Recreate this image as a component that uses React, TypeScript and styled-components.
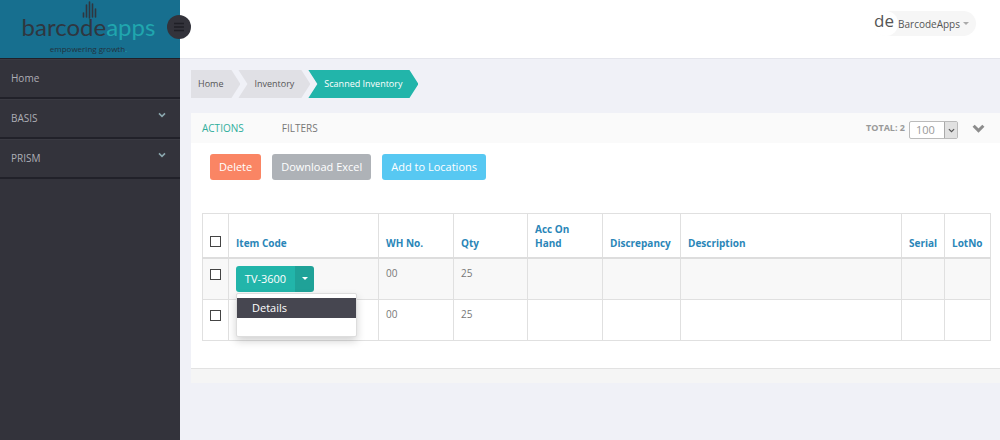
import React from "react";
import styled, { createGlobalStyle } from "styled-components";

const Global = createGlobalStyle`
  * { box-sizing: border-box; }
  body { margin: 0; background: #f0f1f7; font: 11px/14px "Open Sans", "Noto Sans", sans-serif; color: #777; }
  button, select, input { font: inherit; margin: 0; }
  a { text-decoration: none; color: inherit; }
`;

const Page = styled.div`
  display: flex;
  min-height: 100vh;
`;

const Sidebar = styled.aside`
  flex: 0 0 180px;
  background: #33333b;
`;

const Brand = styled.div`
  position: relative;
  height: 59px;
  padding-top: 11px;
  border-bottom: 1px solid #212129;
  background: #176f8f;
  color: #2f3640;
  display: flex;
  flex-direction: column;
  align-items: center;
`;

const BrandBars = styled.svg`
  position: absolute;
  left: 82px;
  top: 1px;
`;

const BrandName = styled.div`
  font: 400 24px/32px Lato, sans-serif;
  padding-right: 3px;
  span { color: #20a6ae; }
`;

const Tagline = styled.div`
  font: 400 8px/12px "Open Sans", sans-serif;
  color: #22323e;
  padding-right: 3px;
  span { color: #20b6ae; }
`;

const MenuToggle = styled.button`
  position: absolute;
  right: -11px;
  top: 15px;
  width: 24px;
  height: 24px;
  padding: 0;
  border: 0;
  border-radius: 50%;
  background: #33333b;
  display: grid;
  place-items: center;
`;

const NavItem = styled.a`
  display: flex;
  justify-content: space-between;
  height: 40px;
  padding: 11px 14px 0 11px;
  border-top: 1px solid #3a3a42;
  border-bottom: 2px solid #212129;
  font-size: 10px;
  color: #adaeb5;
  svg { margin-top: 1px; }
`;

const Main = styled.div`
  flex: 1;
  min-width: 0;
`;

const TopBar = styled.header`
  height: 59px;
  padding: 11px 24px 0 0;
  background: #fff;
  border-bottom: 1px solid #e4e5ec;
  display: flex;
  justify-content: flex-end;
  align-items: flex-start;
`;

const UserButton = styled.button`
  display: flex;
  align-items: center;
  height: 25px;
  padding: 0 7px 0 0;
  border: 0;
  border-radius: 13px;
  background: #f6f6f6;
  color: #555;
  font-size: 10px;
`;

const Avatar = styled.span`
  width: 24px;
  height: 25px;
  border-radius: 12px;
  background: #fff;
  font-size: 17px;
  line-height: 20px;
  text-align: left;
`;

const Caret = styled.span<{ $color: string }>`
  border: 3px solid transparent;
  border-top-color: ${(p) => p.$color};
  border-bottom: 0;
`;

const UserName = styled.span`
  margin-right: 3px;
`;

const Content = styled.main`
  padding: 11px 0 0 11px;
`;

const Crumbs = styled.nav`
  display: flex;
  height: 28px;
`;

const Crumb = styled.a<{ $first?: boolean; $active?: boolean }>`
  line-height: 28px;
  font-size: 9px;
  padding: 0 ${(p) => (p.$first ? 17 : 16)}px 0 ${(p) => (p.$first ? 7 : 16)}px;
  margin-left: ${(p) => (p.$first ? 0 : -2)}px;
  color: ${(p) => (p.$active ? "#fff" : "#555")};
  background: ${(p) => (p.$active ? "#22b5aa" : "#e0e0e5")};
  clip-path: polygon(
    0 0, calc(100% - 9px) 0, 100% 50%, calc(100% - 9px) 100%, 0 100%,
    ${(p) => (p.$first ? "0 50%" : "9px 50%")}
  );
`;

const Panel = styled.section`
  margin-top: 15px;
  background: #fff;
`;

const PanelHead = styled.div`
  display: flex;
  align-items: center;
  height: 30px;
  padding: 0 15px 0 11px;
  background: #fafafa;
`;

const Tab = styled.button<{ $active?: boolean }>`
  padding: 0;
  margin-right: 38px;
  border: 0;
  background: none;
  font-size: 10px;
  color: ${(p) => (p.$active ? "#2fae9c" : "#777")};
`;

const Total = styled.label`
  margin-left: auto;
  margin-right: 4px;
  font-size: 9px;
  font-weight: 700;
  color: #999;
`;

const SelectWrap = styled.span`
  display: flex;
  width: 49px;
  height: 18px;
  margin: 4px 14px 0 0;
  border: 1px solid #bbb;
  border-radius: 2px;
  background: #fff;
  position: relative;
`;

const PageSize = styled.select`
  appearance: none;
  width: 100%;
  padding: 0 0 0 6px;
  border: 0;
  background: transparent;
  color: #999;
  font-size: 11px;
  line-height: 16px;
`;

const SelectArrow = styled.span`
  position: absolute;
  right: 0;
  top: 0;
  bottom: 0;
  width: 13px;
  border-left: 1px solid #aaa;
  background: #e1e1e1;
  display: grid;
  place-items: center;
  pointer-events: none;
`;

const Collapse = styled.button`
  display: flex;
  padding: 0;
  border: 0;
  background: none;
`;

const PanelBody = styled.div`
  padding: 11px 9px 27px 11px;
`;

const Actions = styled.div`
  display: flex;
  gap: 11px;
  padding: 0 8px 33px;
`;

const ActionButton = styled.button<{ $color: string }>`
  height: 26px;
  padding: 0 9px;
  border: 0;
  border-radius: 3px;
  background: ${(p) => p.$color};
  color: #fff;
  font-size: 11px;
`;

const Table = styled.table`
  width: 100%;
  table-layout: fixed;
  border-collapse: collapse;
  th, td {
    border: 1px solid #e0e0e0;
    padding: 7px;
    text-align: left;
    vertical-align: top;
  }
  th {
    height: 44px;
    padding-top: 6px;
    vertical-align: bottom;
    border-bottom: 2px solid #ddd;
    color: #2a86b8;
    font-size: 10px;
    font-weight: 700;
  }
  td { height: 41px; font-size: 10px; }
  tbody tr:nth-child(odd) { background: #f8f8f8; }
`;

const Col = styled.col<{ $w?: number }>`
  width: ${(p) => (p.$w ? `${p.$w}px` : "auto")};
`;

const Tick = styled.input`
  appearance: none;
  display: block;
  width: 11px;
  height: 11px;
  border: 1px solid #444;
  background: #fff;
  margin: 3px 0;
`;

const Split = styled.div`
  position: relative;
  display: flex;
  width: 78px;
  height: 26px;
`;

const SplitMain = styled.button`
  flex: 1;
  padding: 0;
  border: 0;
  border-radius: 3px 0 0 3px;
  background: #22b5aa;
  color: #fff;
  font-size: 11px;
`;

const SplitToggle = styled.button`
  width: 19px;
  padding: 0;
  border: 0;
  border-radius: 0 3px 3px 0;
  background: #1fa298;
  display: grid;
  place-items: center;
`;

const Menu = styled.div`
  position: absolute;
  z-index: 1;
  left: 0;
  top: 27px;
  width: 121px;
  height: 44px;
  padding: 4px 0;
  border: 1px solid #ddd;
  border-radius: 2px;
  background: #fff;
  box-shadow: 0 4px 8px rgba(0, 0, 0, 0.18);
`;

const MenuLink = styled.a`
  display: block;
  padding: 0 15px;
  background: #464650;
  color: #fff;
  font-size: 11px;
  line-height: 20px;
`;

const PanelFoot = styled.div`
  height: 15px;
  border-top: 1px solid #e2e2e2;
  background: #f5f5f5;
`;

function Chevron({ w, h, color, stroke }: { w: number; h: number; color: string; stroke: number }) {
  return (
    <svg width={w} height={h} viewBox="0 0 12 8" fill="none" stroke={color} strokeWidth={stroke} aria-hidden="true">
      <path d="M1.5 1.5 6 6l4.500-4.500" />
    </svg>
  );
}

const bars = [
  [1.5, 12, 16], [4.5, 4, 16], [7.5, 1, 17], [10.5, 3, 16], [13.5, 8, 16],
];

const columns = ["Item Code", "WH No.", "Qty", "Acc On Hand", "Discrepancy", "Description", "Serial", "LotNo"];
const widths = [26, 150, 75, 74, 75, 78, 0, 43, 46];
const rows = [
  { code: "TV-3600", wh: "00", qty: "25", open: true },
  { code: "", wh: "00", qty: "25", open: false },
];

export default function App() {
  return (
    <Page>
      <Global />
      <Sidebar>
        <Brand>
          <BrandBars width="15" height="18" viewBox="0 0 15 18" stroke="#2f3640" strokeWidth="1.6" strokeLinecap="round">
            {bars.map(([x, a, b]) => <path key={x} d={`M${x} ${a}V${b}`} />)}
          </BrandBars>
          <BrandName>barcode<span>apps</span></BrandName>
          <Tagline>empowering growth<span>.</span></Tagline>
          <MenuToggle aria-label="Toggle menu">
            <svg width="10" height="10" viewBox="0 0 10 10" stroke="#1f1f26" strokeWidth="1.3">
              <path d="M0 1.500h10M0 5h10M0 8.500h10" />
            </svg>
          </MenuToggle>
        </Brand>
        <nav>
          <NavItem href="#home">Home</NavItem>
          <NavItem href="#basis">BASIS<Chevron w={8} h={6} color="#8aa6ad" stroke={2.4} /></NavItem>
          <NavItem href="#prism">PRISM<Chevron w={8} h={6} color="#8aa6ad" stroke={2.4} /></NavItem>
        </nav>
      </Sidebar>
      <Main>
        <TopBar>
          <UserButton>
            <Avatar>de</Avatar>
            <UserName>BarcodeApps</UserName>
            <Caret $color="#aaa" />
          </UserButton>
        </TopBar>
        <Content>
          <Crumbs aria-label="Breadcrumb">
            <Crumb href="#home" $first>Home</Crumb>
            <Crumb href="#inventory">Inventory</Crumb>
            <Crumb href="#scanned" $active>Scanned Inventory</Crumb>
          </Crumbs>
          <Panel>
            <PanelHead>
              <Tab $active>ACTIONS</Tab>
              <Tab>FILTERS</Tab>
              <Total htmlFor="page-size">TOTAL: 2</Total>
              <SelectWrap>
                <PageSize id="page-size" defaultValue="100"><option>100</option></PageSize>
                <SelectArrow><Chevron w={7} h={5} color="#555" stroke={2} /></SelectArrow>
              </SelectWrap>
              <Collapse aria-label="Collapse panel"><Chevron w={13} h={9} color="#8c8c8c" stroke={2.8} /></Collapse>
            </PanelHead>
            <PanelBody>
              <Actions>
                <ActionButton $color="#fa8564">Delete</ActionButton>
                <ActionButton $color="#aeb2b7">Download Excel</ActionButton>
                <ActionButton $color="#57c8f2">Add to Locations</ActionButton>
              </Actions>
              <Table>
                <colgroup>{widths.map((w, i) => <Col key={i} $w={w} />)}</colgroup>
                <thead>
                  <tr>
                    <th><Tick type="checkbox" aria-label="Select all" /></th>
                    {columns.map((c) => <th key={c}>{c}</th>)}
                  </tr>
                </thead>
                <tbody>
                  {rows.map((r, i) => (
                    <tr key={i}>
                      <td><Tick type="checkbox" aria-label={`Select row ${i + 1}`} /></td>
                      <td>
                        <Split>
                          <SplitMain aria-label={`Item ${i + 1}`}>{r.code}</SplitMain>
                          <SplitToggle aria-label="Item options"><Caret $color="#fff" /></SplitToggle>
                          {r.open && <Menu><MenuLink href="#details">Details</MenuLink></Menu>}
                        </Split>
                      </td>
                      <td>{r.wh}</td>
                      <td>{r.qty}</td>
                      <td /><td /><td /><td /><td />
                    </tr>
                  ))}
                </tbody>
              </Table>
            </PanelBody>
            <PanelFoot />
          </Panel>
        </Content>
      </Main>
    </Page>
  );
}
